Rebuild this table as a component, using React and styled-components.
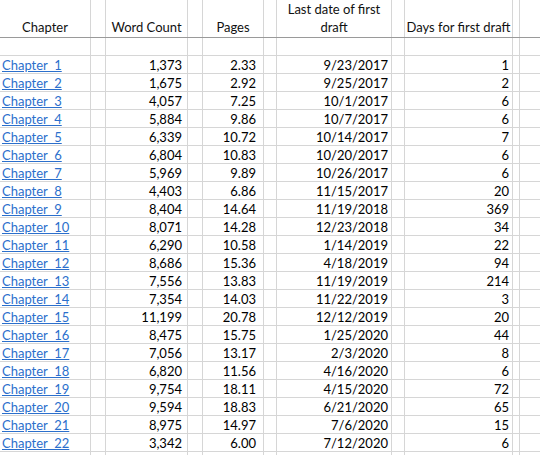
import React from "react";
import styled, { createGlobalStyle } from "styled-components";

const Global = createGlobalStyle`
  html, body { margin: 0; padding: 0; background: #fff; }
  body { font-family: Lato, "Open Sans", "Liberation Sans", sans-serif; }
`;

const COLS = "91px 15px 82px 15px 61px 13px 115px 13px 108px 7px 1fr";

const Sheet = styled.div`
  width: 540px;
  height: 455px;
  overflow: hidden;
  background: #fff;
  color: #000;
  font-size: 13px;
`;

const Row = styled.div`
  display: grid;
  grid-template-columns: ${COLS};
  height: ${(p) => (p.$header ? 38 : 18)}px;
  box-sizing: border-box;
  border-bottom: 1px solid ${(p) => (p.$header ? "#9a9a9a" : "#d6d6d6")};
`;

const Cell = styled.div`
  box-sizing: border-box;
  border-right: 1px solid #d6d6d6;
  display: flex;
  align-items: ${(p) => (p.$header ? "flex-end" : "center")};
  justify-content: ${(p) =>
    p.$align === "right" ? "flex-end" : p.$align === "center" ? "center" : "flex-start"};
  text-align: ${(p) => p.$align || "left"};
  padding: ${(p) => (p.$header ? "0 0 1px 0" : `0 ${p.$pr || 0}px 0 ${p.$pl || 0}px`)};
  line-height: 18px;
  white-space: pre;
  overflow: hidden;
  color: #000;
  &:last-child { border-right: none; }
`;

const HeadText = styled.span`
  display: block;
  text-align: center;
  line-height: 18px;
  white-space: pre-line;
  color: #111;
`;

const Link = styled.a`
  color: #2b6fcc;
  text-decoration: underline;
  text-decoration-color: #2b6fcc;
  text-underline-offset: 1px;
  cursor: pointer;
`;

const data = [
  ["1,373", "2.33", "9/23/2017", "1"],
  ["1,675", "2.92", "9/25/2017", "2"],
  ["4,057", "7.25", "10/1/2017", "6"],
  ["5,884", "9.86", "10/7/2017", "6"],
  ["6,339", "10.72", "10/14/2017", "7"],
  ["6,804", "10.83", "10/20/2017", "6"],
  ["5,969", "9.89", "10/26/2017", "6"],
  ["4,403", "6.86", "11/15/2017", "20"],
  ["8,404", "14.64", "11/19/2018", "369"],
  ["8,071", "14.28", "12/23/2018", "34"],
  ["6,290", "10.58", "1/14/2019", "22"],
  ["8,686", "15.36", "4/18/2019", "94"],
  ["7,556", "13.83", "11/19/2019", "214"],
  ["7,354", "14.03", "11/22/2019", "3"],
  ["11,199", "20.78", "12/12/2019", "20"],
  ["8,475", "15.75", "1/25/2020", "44"],
  ["7,056", "13.17", "2/3/2020", "8"],
  ["6,820", "11.56", "4/16/2020", "6"],
  ["9,754", "18.11", "4/15/2020", "72"],
  ["9,594", "18.83", "6/21/2020", "65"],
  ["8,975", "14.97", "7/6/2020", "15"],
  ["3,342", "6.00", "7/12/2020", "6"],
];

const Blank = () => <Cell />;

export default function App() {
  return (
    <>
      <Global />
      <Sheet>
        <Row $header>
          <Cell $header $align="center"><HeadText>Chapter</HeadText></Cell>
          <Cell $header />
          <Cell $header $align="center"><HeadText>Word Count</HeadText></Cell>
          <Cell $header />
          <Cell $header $align="center"><HeadText>Pages</HeadText></Cell>
          <Cell $header />
          <Cell $header $align="center"><HeadText>{"Last date of first\ndraft"}</HeadText></Cell>
          <Cell $header />
          <Cell $header $align="center"><HeadText>Days for first draft</HeadText></Cell>
          <Cell $header />
          <Cell $header />
        </Row>
        <Row>
          {Array.from({ length: 11 }).map((_, i) => <Blank key={i} />)}
        </Row>
        {data.map((r, i) => (
          <Row key={i}>
            <Cell $pl={2}><Link>{`Chapter  ${i + 1}`}</Link></Cell>
            <Blank />
            <Cell $align="right" $pr={5}>{r[0]}</Cell>
            <Blank />
            <Cell $align="right" $pr={7}>{r[1]}</Cell>
            <Blank />
            <Cell $align="right" $pr={3}>{r[2]}</Cell>
            <Blank />
            <Cell $align="right" $pr={3}>{r[3]}</Cell>
            <Blank />
            <Blank />
          </Row>
        ))}
        <Row>
          {Array.from({ length: 11 }).map((_, i) => <Blank key={i} />)}
        </Row>
      </Sheet>
    </>
  );
}
